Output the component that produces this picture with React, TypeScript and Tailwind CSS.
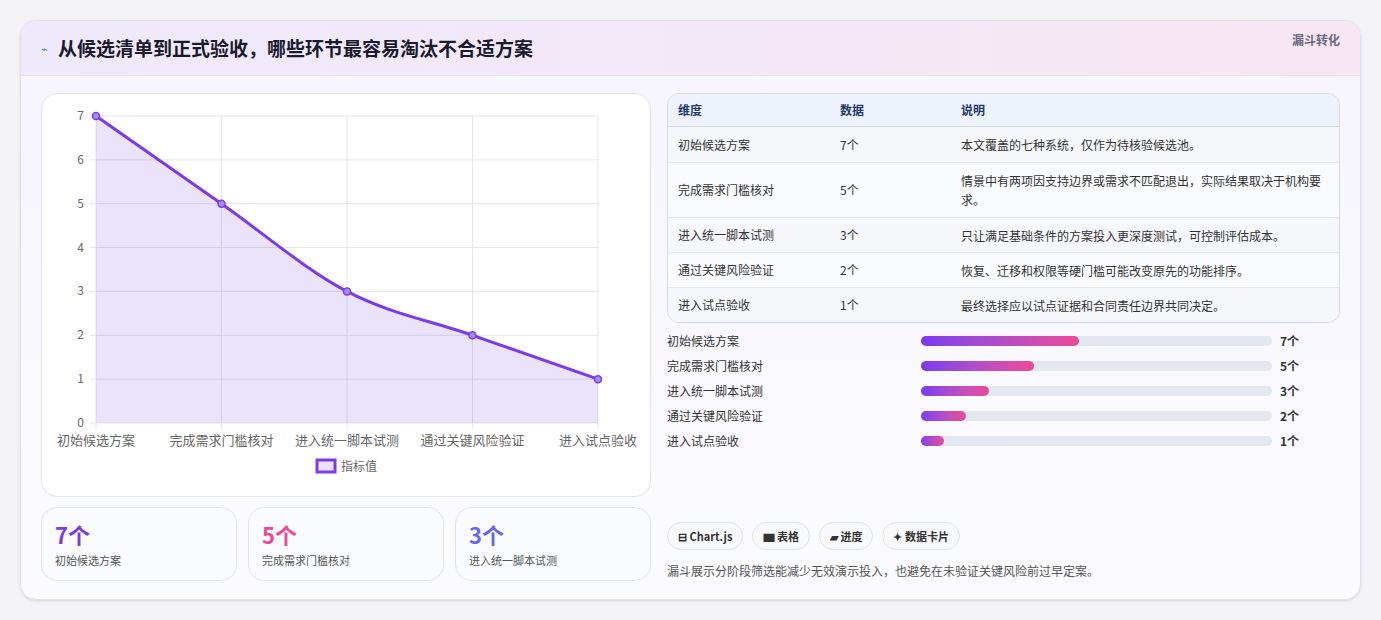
const rows = [
  { name: '初始候选方案', n: 7, note: '本文覆盖的七种系统，仅作为待核验候选池。' },
  { name: '完成需求门槛核对', n: 5, note: '情景中有两项因支持边界或需求不匹配退出，实际结果取决于机构要求。' },
  { name: '进入统一脚本试测', n: 3, note: '只让满足基础条件的方案投入更深度测试，可控制评估成本。' },
  { name: '通过关键风险验证', n: 2, note: '恢复、迁移和权限等硬门槛可能改变原先的功能排序。' },
  { name: '进入试点验收', n: 1, note: '最终选择应以试点证据和合同责任边界共同决定。' },
];

const font = { fontFamily: '"Noto Sans CJK SC", "Liberation Sans", sans-serif' };

function Chart() {
  const x0 = 54, x1 = 556, yb = 329, h = 307;
  const xs = rows.map((_, i) => x0 + ((x1 - x0) / 4) * i);
  const ys = rows.map((r) => yb - (r.n / 7) * h);
  let d = `M${xs[0]},${ys[0]}`;
  for (let i = 0; i < 4; i++) {
    const dx = (xs[i + 1] - xs[i]) / 3;
    const s0 = i === 0 ? (ys[1] - ys[0]) / (xs[1] - xs[0]) : (ys[i + 1] - ys[i - 1]) / (xs[i + 1] - xs[i - 1]);
    const s1 = i === 3 ? (ys[4] - ys[3]) / (xs[4] - xs[3]) : (ys[i + 2] - ys[i]) / (xs[i + 2] - xs[i]);
    d += ` C${xs[i] + dx},${ys[i] + s0 * dx} ${xs[i + 1] - dx},${ys[i + 1] - s1 * dx} ${xs[i + 1]},${ys[i + 1]}`;
  }
  return (
    <svg width="610" height="400" className="block">
      {[0, 1, 2, 3, 4, 5, 6, 7].map((v) => {
        const y = yb - (v / 7) * h;
        return (
          <g key={v}>
            <line x1={x0 - 6} x2={x1} y1={y} y2={y} stroke="#e5e5ea" />
            <text x={x0 - 12} y={y + 4} fontSize="12" fill="#666" textAnchor="end">{v}</text>
          </g>
        );
      })}
      {xs.map((x, i) => (
        <g key={i}>
          <line x1={x} x2={x} y1={yb - h} y2={yb + 6} stroke="#e5e5ea" />
          <text x={x} y={yb + 22} fontSize="13" fill="#666" textAnchor="middle">{rows[i].name}</text>
        </g>
      ))}
      <path d={`${d} L${x1},${yb} L${x0},${yb} Z`} fill="rgba(124,58,237,0.15)" />
      <path d={d} fill="none" stroke="#7c3aed" strokeWidth="3" />
      {xs.map((x, i) => (
        <circle key={i} cx={x} cy={ys[i]} r="3.5" fill="#a78bfa" stroke="#7c3aed" strokeWidth="1.5" />
      ))}
      <rect x="275" y="366" width="18" height="12" fill="rgba(124,58,237,0.15)" stroke="#7c3aed" strokeWidth="3" />
      <text x="299" y="377" fontSize="12" fill="#666">指标值</text>
    </svg>
  );
}

export default function App() {
  return (
    <div className="h-[620px] w-[1381px] bg-[#f3f3f6] px-5 pt-5" style={font}>
      <div className="flex h-[580px] flex-col overflow-hidden rounded-2xl border border-[#e2e0f0] bg-gradient-to-b from-[#f6f4fd] to-[#fbfbff] shadow-sm">
        <div className="flex h-[55px] shrink-0 items-center justify-between border-b border-[#e6e2f3] bg-gradient-to-r from-[#eeeafb] to-[#f8e6f2] pl-5 pr-5">
          <div className="flex items-center gap-2.5">
            <span className="text-[11px] text-[#4f6fd8]">⌁</span>
            <h1 className="text-[19px] font-bold text-[#1a1a2e]">从候选清单到正式验收，哪些环节最容易淘汰不合适方案</h1>
          </div>
          <span className="-mt-4 text-xs font-bold text-[#6b6b80]">漏斗转化</span>
        </div>
        <div className="flex flex-1 gap-4 px-5 pt-[17px]">
          <div className="w-[610px]">
            <div className="h-[404px] rounded-2xl border border-[#e3e3ee] bg-white">
              <Chart />
            </div>
            <div className="mt-[10px] grid grid-cols-3 gap-[11px]">
              {rows.slice(0, 3).map((r, i) => (
                <div key={i} className="h-[74px] rounded-2xl border border-[#e3e3ee] bg-[#fafbff] px-[13px] pt-3">
                  <div className={`text-[22px] font-bold leading-7 ${['text-[#7c3aed]', 'text-[#ec4899]', 'text-[#6366f1]'][i]}`}>{r.n}个</div>
                  <div className="mt-1 text-[11px] text-[#555]">{r.name}</div>
                </div>
              ))}
            </div>
          </div>
          <div className="flex flex-1 flex-col pb-[19px]">
            <div className="overflow-hidden rounded-xl border border-[#d6dbe8] text-[12px] text-[#333]">
              <div className="grid h-[33px] grid-cols-[162px_121px_1fr] items-center border-b border-[#d6dbe8] bg-[#eef2fc] px-[10px] font-bold text-[#1e3a6e]">
                <span>维度</span><span>数据</span><span>说明</span>
              </div>
              {rows.map((r, i) => (
                <div key={i} className={`grid grid-cols-[162px_121px_1fr] items-center border-[#e2e6ef] pl-[10px] pr-[16px] ${i ? 'border-t' : ''} ${i % 2 ? 'bg-[#fafbff]' : 'bg-[#f6f7fb]'} ${i === 1 ? 'py-[8px]' : 'h-[35px]'}`}>
                  <span>{r.name}</span><span>{r.n}个</span><span className="leading-[19px]">{r.note}</span>
                </div>
              ))}
            </div>
            <div className="mt-[10px] flex flex-col gap-[9px]">
              {rows.map((r, i) => (
                <div key={i} className="flex h-[16px] items-center text-[12px] text-[#333]">
                  <span className="w-[254px]">{r.name}</span>
                  <div className="h-[10px] w-[351px] rounded-full bg-[#e3e7ef]">
                    <div className="h-full rounded-full bg-gradient-to-r from-[#7c3aed] to-[#ec4899]" style={{ width: `${(r.n / 7) * 45}%` }} />
                  </div>
                  <span className="ml-2 font-bold">{r.n}个</span>
                </div>
              ))}
            </div>
            <div className="mt-auto flex gap-[9px]">
              {['⊟ Chart.js', '▆ 表格', '▰ 进度', '✦ 数据卡片'].map((t) => (
                <span key={t} className="flex h-[28px] items-center rounded-full border border-[#e3e3ee] bg-[#f8f9fc] px-[10px] text-[11px] font-bold text-[#333]">{t}</span>
              ))}
            </div>
            <p className="mt-[12px] text-[12px] text-[#555]">漏斗展示分阶段筛选能减少无效演示投入，也避免在未验证关键风险前过早定案。</p>
          </div>
        </div>
      </div>
    </div>
  );
}
